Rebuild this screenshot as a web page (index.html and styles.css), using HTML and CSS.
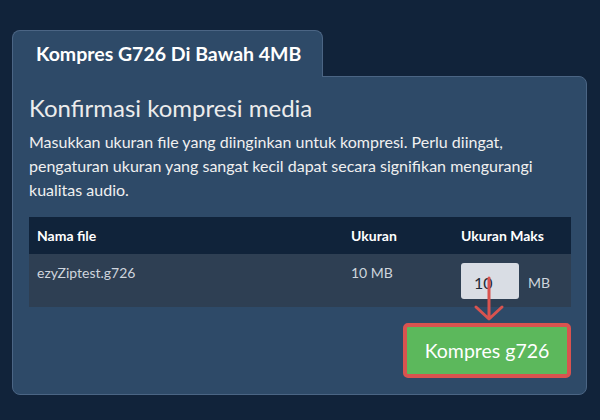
FILE: index.html
```html
<!DOCTYPE html>
<html>
<head>
<meta charset="utf-8">
<link rel="stylesheet" href="styles.css">
</head>
<body>
<div class="wrap">
  <div class="tab">Kompres G726 Di Bawah 4MB</div>
  <div class="panel">
    <h2 class="title">Konfirmasi kompresi media</h2>
    <p class="desc">Masukkan ukuran file yang diinginkan untuk kompresi. Perlu diingat, pengaturan ukuran yang sangat kecil dapat secara signifikan mengurangi kualitas audio.</p>
    <div class="table">
      <div class="row head">
        <div class="c1">Nama file</div>
        <div class="c2">Ukuran</div>
        <div class="c3">Ukuran Maks</div>
      </div>
      <div class="row body">
        <div class="c1">ezyZiptest.g726</div>
        <div class="c2">10 MB</div>
        <div class="c3 maxcell">
          <span class="input">10</span><span class="unit">MB</span>
          <svg class="arrow" width="32" height="46" viewBox="0 0 32 46">
            <path d="M16 2 V42 M3 31 L16 43 L29 31" fill="none" stroke="#d9534f" stroke-width="3" stroke-linecap="round" stroke-linejoin="round"/>
          </svg>
        </div>
      </div>
    </div>
    <div class="actions">
      <button class="btn">Kompres g726</button>
    </div>
  </div>
</div>
</body>
</html>
```
FILE: styles.css
```css
html, body {
  margin: 0;
  padding: 0;
}
body {
  background: #11233a;
  font-family: Lato, "Open Sans", sans-serif;
  color: #ffffff;
  width: 600px;
  height: 420px;
  overflow: hidden;
}
.wrap {
  padding: 30px 13px 0 12px;
}
.tab {
  position: relative;
  z-index: 1;
  display: block;
  box-sizing: border-box;
  width: 311px;
  height: 47px;
  margin-bottom: -1px;
  padding-left: 23px;
  background: #2e4a68;
  border: 1px solid #4b6584;
  border-bottom: none;
  border-radius: 8px 8px 0 0;
  font-weight: 700;
  font-size: 19.5px;
  line-height: 46px;
  color: #ffffff;
}
.panel {
  box-sizing: border-box;
  height: 319px;
  background: #2e4a68;
  border: 1px solid #4b6584;
  border-radius: 0 8px 8px 8px;
  padding: 14px 15px 0 16px;
}
.title {
  margin: 0;
  font-weight: 400;
  font-size: 24px;
  line-height: 34px;
  color: #ececec;
}
.desc {
  margin: 5px 0 0;
  font-size: 16px;
  line-height: 24px;
  color: #f0f0f0;
}
.table {
  margin-top: 15px;
}
.row {
  display: grid;
  grid-template-columns: 314px 110px 120px;
}
.row > div {
  padding: 0 8px;
}
.head {
  background: #10233a;
  height: 37px;
  align-items: center;
  font-weight: 700;
  font-size: 14px;
  color: #ffffff;
}
.body {
  background: #2e3f53;
  height: 53px;
  font-size: 14px;
  color: #cfd5dd;
}
.body .c1, .body .c2 {
  padding-top: 10px;
  line-height: 18px;
}
.maxcell {
  position: relative;
  display: flex;
  align-items: center;
  padding-top: 9px !important;
  align-self: start;
}
.input {
  box-sizing: border-box;
  width: 58px;
  height: 36px;
  background: #d9dde4;
  border-radius: 3px;
  padding-left: 13px;
  font-size: 16px;
  line-height: 40px;
  color: #222b36;
}
.unit {
  margin-left: 9px;
  font-size: 14px;
  color: #cfd5dd;
  padding-top: 2px;
}
.arrow {
  position: absolute;
  left: 20px;
  top: 22px;
}
.actions {
  display: flex;
  justify-content: flex-end;
  margin-top: 16px;
}
.btn {
  box-sizing: border-box;
  width: 168px;
  height: 55px;
  background: #5cb85c;
  border: 4px solid #d9534f;
  border-radius: 5px;
  font-family: Lato, "Open Sans", sans-serif;
  font-size: 19.5px;
  color: #ffffff;
  padding: 0;
}
```
